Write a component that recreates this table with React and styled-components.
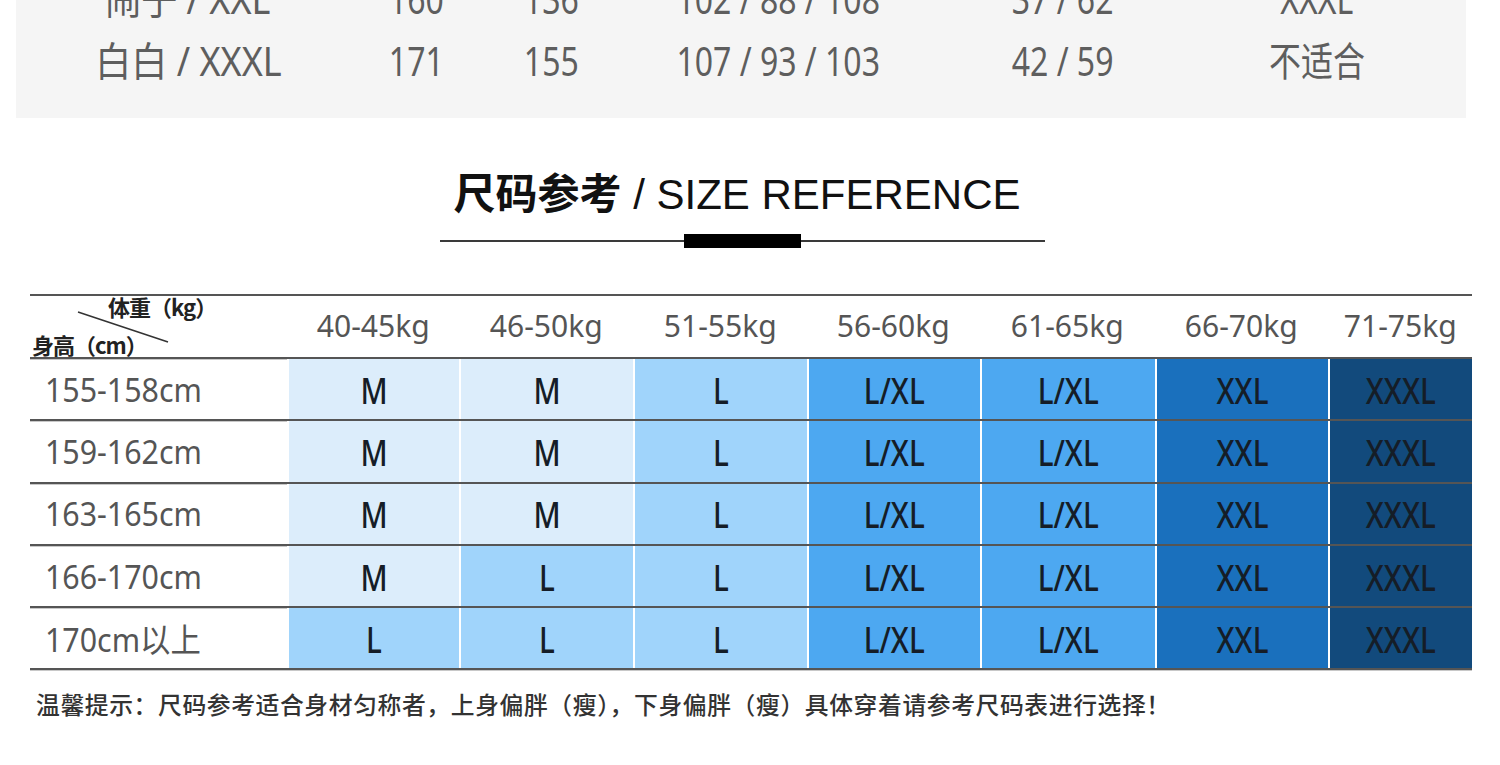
import React from 'react';
import styled, { createGlobalStyle } from 'styled-components';

const Global = createGlobalStyle`
  html, body { margin: 0; padding: 0; background: #ffffff; }
  body {
    font-family: "Noto Sans", "Noto Sans CJK SC", sans-serif;
    overflow: hidden;
  }
`;

const Page = styled.div`
  width: 1500px;
  height: 765px;
  overflow: hidden;
  display: flex;
  flex-direction: column;
`;

const SpecPanel = styled.section`
  margin: -32px 34px 0 16px;
  background: #f5f5f5;
  padding-bottom: 26px;
`;

const SpecRow = styled.div`
  display: grid;
  grid-template-columns: 344px 112px 158px 296px 274px 234px;
  height: 62px;
  align-items: center;
`;

const SpecCell = styled.div`
  text-align: center;
  font-size: 40px;
  line-height: 1;
  color: #5e5e5e;
  font-family: "Noto Sans", "Noto Sans CJK SC", sans-serif;
`;

const Narrow = styled.span`
  display: inline-block;
  white-space: nowrap;
  transform: scaleX(${(p) => p.$k ?? 0.8});
  transform-origin: ${(p) => p.$origin || 'center'};
`;

const Heading = styled.header`
  width: 605px;
  margin: 48px 0 0 440px;
  display: flex;
  flex-direction: column;
  align-items: stretch;
`;

const Title = styled.h2`
  margin: 0;
  padding-right: 11px;
  text-align: center;
  font-size: 42px;
  line-height: 50px;
  color: #111;
  font-weight: 400;
  white-space: nowrap;
`;

const TitleCn = styled.span`
  font-family: "Noto Sans CJK SC", sans-serif;
  font-weight: 700;
`;

const TitleEn = styled.span`
  font-family: "Liberation Sans", Arial, sans-serif;
  font-weight: 400;
`;

const Divider = styled.div`
  margin-top: 14px;
  height: 14px;
  display: flex;
  align-items: center;
`;

const Rule = styled.div`
  flex: 1;
  height: 2px;
  background: #3a3a3a;
`;

const Bar = styled.div`
  width: 117px;
  height: 14px;
  background: #000;
`;

const COLS = '257px 172px 174px 174px 173px 175px 173px 144px';

const Table = styled.div`
  margin: 46px 0 0 30px;
  width: 1442px;
  border-top: 2px solid #555;
`;

const Row = styled.div`
  display: grid;
  grid-template-columns: ${COLS};
  height: ${(p) => p.$h}px;
  border-bottom: 2px solid #555;
  box-shadow: 0 1px 0 #c8c8c8;
`;

const Corner = styled.div`
  position: relative;
`;

const CornerLabel = styled.span`
  position: absolute;
  left: ${(p) => p.$x}px;
  top: ${(p) => p.$y}px;
  font-family: "Noto Sans CJK SC", sans-serif;
  font-size: 22px;
  line-height: 24px;
  font-weight: 700;
  color: #222;
  white-space: nowrap;
  letter-spacing: -1px;
`;

const CornerLine = styled.svg`
  position: absolute;
  left: 0;
  top: 0;
`;

const HeadCell = styled.div`
  display: flex;
  align-items: center;
  justify-content: center;
  padding-bottom: 4px;
  font-size: 31px;
  color: #555;
`;

const LabelCell = styled.div`
  display: flex;
  align-items: center;
  padding-left: 15px;
  font-size: 33px;
  color: #555;
  font-family: "Noto Sans", "Noto Sans CJK SC", sans-serif;
`;

const SIZE_BG = {
  M: '#dcedfb',
  L: '#a0d4fb',
  'L/XL': '#4da8f1',
  XXL: '#1a70bd',
  XXXL: '#124a7c',
};

const SizeCell = styled.div`
  display: flex;
  align-items: center;
  justify-content: center;
  background: ${(p) => SIZE_BG[p.$size]};
  border-left: 2px solid #ffffff;
  font-size: 37px;
  font-weight: 500;
  color: #151d27;
`;

const Note = styled.p`
  margin: 19px 0 0 36px;
  font-family: "Noto Sans CJK SC", sans-serif;
  font-size: 23.8px;
  line-height: 30px;
  letter-spacing: 0.6px;
  font-weight: 500;
  color: #333;
  white-space: nowrap;
`;

const specRows = [
  ['闹子 / XXL', '160', '136', '102 / 88 / 108', '37 / 62', 'XXXL'],
  ['白白 / XXXL', '171', '155', '107 / 93 / 103', '42 / 59', '不适合'],
];

const weights = ['40-45kg', '46-50kg', '51-55kg', '56-60kg', '61-65kg', '66-70kg', '71-75kg'];

const rows = [
  ['155-158cm', ['M', 'M', 'L', 'L/XL', 'L/XL', 'XXL', 'XXXL']],
  ['159-162cm', ['M', 'M', 'L', 'L/XL', 'L/XL', 'XXL', 'XXXL']],
  ['163-165cm', ['M', 'M', 'L', 'L/XL', 'L/XL', 'XXL', 'XXXL']],
  ['166-170cm', ['M', 'L', 'L', 'L/XL', 'L/XL', 'XXL', 'XXXL']],
  ['170cm以上', ['L', 'L', 'L', 'L/XL', 'L/XL', 'XXL', 'XXXL']],
];

export default function App() {
  return (
    <Page>
      <Global />
      <SpecPanel>
        {specRows.map((r, i) => (
          <SpecRow key={i}>
            {r.map((c, j) => (
              <SpecCell key={j}>
                <Narrow $k={j === 0 ? 0.9 : 0.8}>{c}</Narrow>
              </SpecCell>
            ))}
          </SpecRow>
        ))}
      </SpecPanel>

      <Heading>
        <Title>
          <TitleCn>尺码参考</TitleCn>
          <TitleEn> / SIZE REFERENCE</TitleEn>
        </Title>
        <Divider>
          <Rule />
          <Bar />
          <Rule />
        </Divider>
      </Heading>

      <Table>
        <Row $h={61}>
          <Corner>
            <CornerLine width="257" height="61" viewBox="0 0 257 61">
              <line x1="48" y1="16" x2="138" y2="46" stroke="#333" strokeWidth="1.6" />
            </CornerLine>
            <CornerLabel $x={78} $y={-2}>体重（kg）</CornerLabel>
            <CornerLabel $x={2} $y={36}>身高（cm）</CornerLabel>
          </Corner>
          {weights.map((w) => (
            <HeadCell key={w}>
              <Narrow $k={0.97}>{w}</Narrow>
            </HeadCell>
          ))}
        </Row>
        {rows.map(([label, sizes]) => (
          <Row key={label} $h={60.3}>
            <LabelCell>
              <Narrow $k={0.92} $origin="left">{label}</Narrow>
            </LabelCell>
            {sizes.map((s, i) => (
              <SizeCell key={i} $size={s}>
                <Narrow $k={0.8}>{s}</Narrow>
              </SizeCell>
            ))}
          </Row>
        ))}
      </Table>

      <Note>温馨提示：尺码参考适合身材匀称者，上身偏胖（瘦），下身偏胖（瘦）具体穿着请参考尺码表进行选择！</Note>
    </Page>
  );
}
